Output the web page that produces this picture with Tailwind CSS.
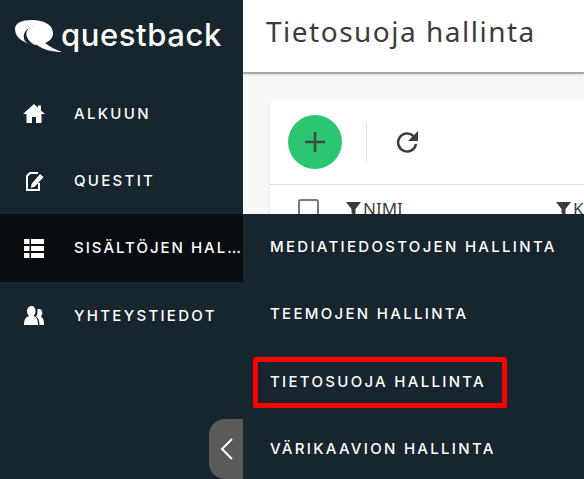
<!DOCTYPE html>
<html lang="fi">
<head>
  <meta charset="UTF-8" />
  <title>Tietosuoja hallinta</title>
  <script src="https://cdn.jsdelivr.net/npm/@tailwindcss/browser@4"></script>
</head>
<body class="bg-[#f8f8f8] font-['Inter',sans-serif] overflow-hidden">
<div class="relative flex h-[479px] w-[584px] overflow-hidden">

  <!-- Sidebar -->
  <aside class="relative w-[243px] shrink-0 bg-[#17262e] text-white">
    <div class="flex h-[80px] items-start pl-[15px] pt-[20px]">
      <svg class="shrink-0" width="48" height="33" viewBox="0 0 48 33">
        <path fill="#fff" d="M0 9C0 3 7 0 17 0c12 0 21 5 21 13 0 5-3 8-8 10 5 4 11 7 17 9-9 0-18-2-25-7C9 24 0 18 0 9z"/>
        <path fill="#17262e" d="M20 6c-7 1-10 6-8 11 1 3 4 6 9 9-4-1-8-2-11-5-3-5-1-13 10-15z"/>
      </svg>
      <span class="-ml-[2px] font-['Inter',sans-serif] text-[31px] leading-[30px] font-medium tracking-[0.6px]">questback</span>
    </div>

    <nav class="text-[15px] font-medium tracking-[2.3px]">
      <a class="flex h-[67px] items-center">
        <span class="flex w-[74px] justify-center pr-[6px]">
          <svg width="22" height="19" viewBox="0 0 22 19" fill="#fff"><path d="M11 0 0 10h3.500v9H9v-6h4v6h5.500v-9H22l-4-3.600V1.500h-3v2.200z"/></svg>
        </span>
        <span class="pt-[2px]">ALKUUN</span>
      </a>
      <a class="flex h-[67px] items-center">
        <span class="flex w-[74px] justify-center pr-[6px]">
          <svg width="19" height="20" viewBox="0 0 19 20" fill="none"><path d="M13 2H5L2 5v14h12v-7" stroke="#fff" stroke-width="2"/><path fill="#fff" d="M15 3l3.500 3L10 15.500l-4 1.500.5-4z"/></svg>
        </span>
        <span class="pt-[2px]">QUESTIT</span>
      </a>
      <a class="flex h-[68px] items-center bg-[#080d10]">
        <span class="flex w-[74px] justify-center pr-[6px]">
          <svg width="20" height="19" viewBox="0 0 20 19" fill="#fff"><path d="M0 0h5.500v5H0zM7 0h13v5H7zM0 7h5.500v5H0zM7 7h13v5H7zM0 14h5.500v5H0zM7 14h13v5H7z"/></svg>
        </span>
        <span class="w-[169px] truncate pt-[1px] tracking-[2px]">SISÄLTÖJEN HALLINTA</span>
      </a>
      <a class="flex h-[67px] items-center">
        <span class="flex w-[74px] justify-center pr-[6px]">
          <svg width="20" height="19" viewBox="0 0 20 19" fill="#fff"><path d="M7.500 0C10 0 11.500 2 11.500 5c0 2-1 4-2 5 3 1 4.500 3 4.500 9H0c0-6 2-8 5-9-1-1-2-3-2-5 0-3 2-5 4.500-5z"/><path d="M15 3c2 0 3.300 1.500 3.300 4 0 1.500-.8 3-1.500 4 2 .7 3.200 2 3.200 8h-4.500c0-4-1-7-3.500-8.500 1-1.500 1.500-3 1.500-5 0-1 0-1.800-.5-1.800C13.500 3.300 14 3 15 3z"/></svg>
        </span>
        <span class="pt-[2px]">YHTEYSTIEDOT</span>
      </a>
    </nav>

    <button class="absolute right-0 bottom-0 flex h-[60px] w-[34px] items-center justify-center rounded-l-[16px] bg-[#5a5a5a]">
      <svg width="13" height="22" viewBox="0 0 13 22" fill="none"><path d="M12 1 2 11l10 10" stroke="#fff" stroke-width="2"/></svg>
    </button>
  </aside>

  <!-- Main -->
  <main class="min-w-0 flex-1">
    <header class="flex h-[74px] items-start border-b-2 border-[#a8a8a8] bg-white pl-[23px] pt-[12px] shadow-sm">
      <h1 class="font-['Noto_Sans',sans-serif] text-[28px] leading-[38px] tracking-[1.5px] text-[#3c3c3c]">Tietosuoja hallinta</h1>
    </header>

    <section class="mt-[25px] ml-[27px] h-[200px] w-[400px] rounded-[6px] bg-white shadow-sm">
      <div class="flex h-[86px] items-center border-b border-[#dddddd] pl-[18px]">
        <button class="flex h-[54px] w-[54px] items-center justify-center rounded-full bg-[#2cc672]">
          <svg width="20" height="20" viewBox="0 0 20 20"><path d="M10 0v20M0 10h20" stroke="#3f4a45" stroke-width="2.500"/></svg>
        </button>
        <div class="ml-[24px] h-[40px] w-px bg-[#e2e2e2]"></div>
        <svg class="ml-[29px]" width="24" height="24" viewBox="0 0 24 24" fill="none">
          <path d="M20 14a9 9 0 1 1-2.600-8" stroke="#3d3d3d" stroke-width="2.500"/>
          <path fill="#3d3d3d" d="M22 1v10H12z"/>
        </svg>
      </div>
      <div class="flex items-center pt-[14px] pl-[28px] font-['Noto_Sans',sans-serif] text-[17px] leading-[20px] text-[#3c3c3c]">
        <span class="h-[20px] w-[21px] rounded-[3px] border-2 border-[#777777]"></span>
        <svg class="ml-[27px]" width="15" height="14" viewBox="0 0 15 14" fill="#3c3c3c"><path d="M0 0h15L9.500 7v7L5.500 11V7z"/></svg>
        <span class="ml-[2px]">NIMI</span>
        <svg class="ml-[153px]" width="15" height="14" viewBox="0 0 15 14" fill="#3c3c3c"><path d="M0 0h15L9.500 7v7L5.500 11V7z"/></svg>
        <span class="ml-[2px]">K</span>
      </div>
    </section>
  </main>

  <!-- Flyout menu -->
  <div class="absolute top-[214px] bottom-0 left-[243px] right-0 bg-[#17262e] text-[15px] font-medium tracking-[2.3px] text-white">
    <a class="flex h-[66px] items-center pl-[27px]">MEDIATIEDOSTOJEN HALLINTA</a>
    <a class="flex h-[68px] items-center pl-[27px]">TEEMOJEN HALLINTA</a>
    <a class="flex h-[68px] items-center pl-[27px]">TIETOSUOJA HALLINTA</a>
    <a class="flex h-[67px] items-center pl-[27px]">VÄRIKAAVION HALLINTA</a>
  </div>

  <!-- Highlight -->
  <div class="absolute top-[357px] left-[253px] h-[51px] w-[254px] rounded-[2px] border-[5px] border-[#ff0000]"></div>
</div>
</body>
</html>
